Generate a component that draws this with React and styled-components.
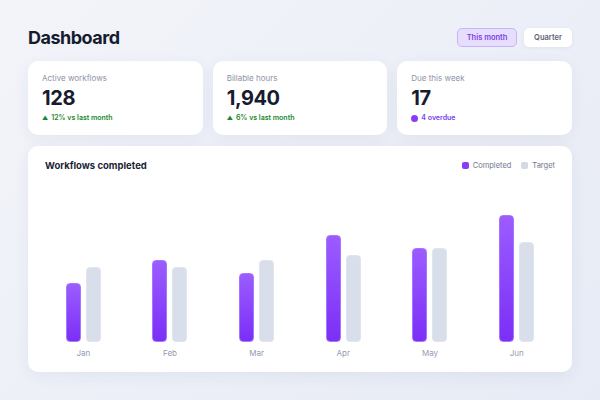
import styled, { createGlobalStyle } from "styled-components";

const GlobalStyle = createGlobalStyle`
  html, body {
    margin: 0;
    padding: 0;
  }
  body {
    font-family: Inter, "Noto Sans", "Liberation Sans", sans-serif;
    background: linear-gradient(135deg, #f2f4f9 0%, #e7ebf5 100%);
    min-height: 400px;
  }
`;

const Page = styled.div`
  width: 600px;
  height: 400px;
  box-sizing: border-box;
  padding: 28px 28px 0;
  display: flex;
  flex-direction: column;
`;

const Header = styled.div`
  display: flex;
  align-items: center;
  justify-content: space-between;
  height: 19px;
`;

const Title = styled.h1`
  margin: 0;
  font-size: 18px;
  font-weight: 700;
  letter-spacing: -0.5px;
  color: #171b2e;
`;

const Toggle = styled.div`
  display: flex;
  gap: 7px;
`;

const ToggleButton = styled.button`
  height: 19px;
  width: ${({ $active }) => ($active ? "60px" : "48px")};
  box-sizing: border-box;
  padding: 0;
  border-radius: 5px;
  font-family: inherit;
  font-size: 7.5px;
  font-weight: 600;
  border: 1px solid ${({ $active }) => ($active ? "#c8b4f8" : "transparent")};
  background: ${({ $active }) => ($active ? "#e6defc" : "#ffffff")};
  color: ${({ $active }) => ($active ? "#7c3aed" : "#5c6379")};
  box-shadow: ${({ $active }) => ($active ? "none" : "0 1px 4px rgba(40, 50, 90, 0.06)")};
`;

const Stats = styled.div`
  display: grid;
  grid-template-columns: repeat(3, 1fr);
  gap: 10px;
  margin-top: 14px;
`;

const Card = styled.div`
  background: #ffffff;
  border-radius: 10px;
  box-shadow: 0 4px 16px rgba(40, 55, 110, 0.06);
`;

const StatCard = styled(Card)`
  height: 74px;
  box-sizing: border-box;
  padding: 12px 14px;
  display: flex;
  flex-direction: column;
`;

const StatLabel = styled.div`
  font-size: 8px;
  line-height: 10px;
  color: #8d93a5;
`;

const StatValue = styled.div`
  margin-top: 3px;
  font-size: 20px;
  line-height: 24px;
  font-weight: 700;
  letter-spacing: -0.4px;
  color: #171b2e;
`;

const StatNote = styled.div`
  margin-top: 3px;
  font-size: 7px;
  line-height: 10px;
  font-weight: 600;
  color: ${({ $tone }) => ($tone === "purple" ? "#7c3aed" : "#178a2c")};
  display: flex;
  align-items: center;
  gap: 3px;
`;

const Arrow = styled.span`
  font-size: 6px;
`;

const Dot = styled.span`
  width: 7px;
  height: 7px;
  border-radius: 50%;
  background: #8b3cf7;
`;

const ChartCard = styled(Card)`
  margin-top: 11px;
  height: 226px;
  box-sizing: border-box;
  padding: 13px 12px 14px;
  display: flex;
  flex-direction: column;
`;

const ChartHeader = styled.div`
  display: flex;
  align-items: center;
  justify-content: space-between;
  padding: 0 5px;
  height: 12px;
`;

const ChartTitle = styled.div`
  font-size: 9.5px;
  font-weight: 700;
  color: #1a1f36;
`;

const Legend = styled.div`
  display: flex;
  gap: 10px;
`;

const LegendItem = styled.div`
  display: flex;
  align-items: center;
  gap: 4px;
  font-size: 7.5px;
  color: #6f768c;
`;

const Swatch = styled.span`
  width: 7px;
  height: 7px;
  border-radius: 2px;
  background: ${({ $color }) => $color};
`;

const Plot = styled.div`
  flex: 1;
  display: grid;
  grid-template-columns: repeat(6, 1fr);
  align-items: end;
`;

const Group = styled.div`
  display: flex;
  flex-direction: column;
  align-items: center;
  gap: 6px;
`;

const Bars = styled.div`
  display: flex;
  align-items: flex-end;
  gap: 5px;
`;

const Bar = styled.div`
  width: 15px;
  box-sizing: border-box;
  border-radius: 4px;
  background: ${({ $kind }) =>
    $kind === "done"
      ? "linear-gradient(180deg, #9b5cff 0%, #7b2ff6 100%)"
      : "#d9dfea"};
  border: 1px solid ${({ $kind }) => ($kind === "done" ? "#a875ff" : "#dfe4ee")};
`;

const Month = styled.div`
  font-size: 8px;
  line-height: 10px;
  color: #939bb0;
`;

const stats = [
  { label: "Active workflows", value: "128", note: "12% vs last month" },
  { label: "Billable hours", value: "1,940", note: "6% vs last month" },
  { label: "Due this week", value: "17", note: "4 overdue", tone: "purple" },
];

const months = [
  { name: "Jan", done: 59, target: 75 },
  { name: "Feb", done: 82, target: 75 },
  { name: "Mar", done: 69, target: 82 },
  { name: "Apr", done: 107, target: 87 },
  { name: "May", done: 94, target: 94 },
  { name: "Jun", done: 127, target: 100 },
];

export default function App() {
  return (
    <>
      <GlobalStyle />
      <Page>
        <Header>
          <Title>Dashboard</Title>
          <Toggle>
            <ToggleButton $active>This month</ToggleButton>
            <ToggleButton>Quarter</ToggleButton>
          </Toggle>
        </Header>

        <Stats>
          {stats.map((s) => (
            <StatCard key={s.label}>
              <StatLabel>{s.label}</StatLabel>
              <StatValue>{s.value}</StatValue>
              <StatNote $tone={s.tone}>
                {s.tone === "purple" ? <Dot /> : <Arrow>▲</Arrow>}
                {s.note}
              </StatNote>
            </StatCard>
          ))}
        </Stats>

        <ChartCard>
          <ChartHeader>
            <ChartTitle>Workflows completed</ChartTitle>
            <Legend>
              <LegendItem>
                <Swatch $color="#8b3cf7" />
                Completed
              </LegendItem>
              <LegendItem>
                <Swatch $color="#d3dae6" />
                Target
              </LegendItem>
            </Legend>
          </ChartHeader>
          <Plot>
            {months.map((m) => (
              <Group key={m.name}>
                <Bars>
                  <Bar $kind="done" style={{ height: m.done }} />
                  <Bar $kind="target" style={{ height: m.target }} />
                </Bars>
                <Month>{m.name}</Month>
              </Group>
            ))}
          </Plot>
        </ChartCard>
      </Page>
    </>
  );
}
